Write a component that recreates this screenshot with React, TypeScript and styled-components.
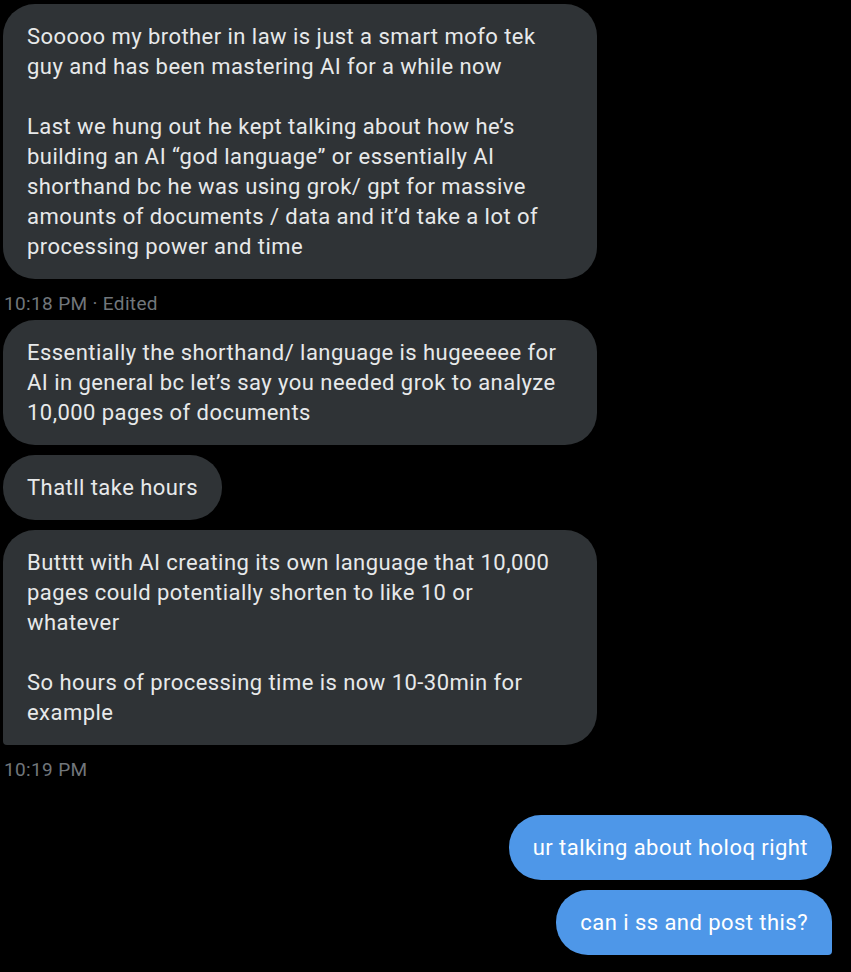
import React from "react";
import styled, { createGlobalStyle, css } from "styled-components";

const GlobalStyle = createGlobalStyle`
  html, body {
    margin: 0;
    padding: 0;
    background: #000000;
  }
  body {
    font-family: Roboto, "Liberation Sans", Arial, sans-serif;
    -webkit-font-smoothing: antialiased;
  }
`;

const Thread = styled.div`
  display: flex;
  flex-direction: column;
  padding: 4px 19px 0 3px;
  height: 972px;
  box-sizing: border-box;
  overflow: hidden;
`;

const Group = styled.div<{ $sent?: boolean; $after: number }>`
  display: flex;
  flex-direction: column;
  align-items: ${(p) => (p.$sent ? "flex-end" : "flex-start")};
  gap: 10px;
  margin-bottom: ${(p) => p.$after}px;
`;

const Bubble = styled.div<{ $sent?: boolean; $tail?: boolean; $wide?: boolean }>`
  box-sizing: border-box;
  max-width: 594px;
  ${(p) => p.$wide && css`width: 594px;`}
  padding: 17.5px 24px;
  border-radius: 32px;
  font-size: 22px;
  letter-spacing: 0.45px;
  line-height: 30px;
  white-space: pre-line;
  color: ${(p) => (p.$sent ? "#ffffff" : "#e7e9ea")};
  background: ${(p) => (p.$sent ? "#4e97e8" : "#2f3336")};
  ${(p) =>
    p.$tail &&
    (p.$sent
      ? css`border-bottom-right-radius: 4px;`
      : css`border-bottom-left-radius: 4px;`)}
`;

const Meta = styled.div`
  margin-top: 2px;
  font-size: 19px;
  letter-spacing: 0.35px;
  line-height: 26px;
  color: #71767b;
  padding-left: 1px;
`;

type Msg = { text: string; wide?: boolean; tail?: boolean };
type G = { sent?: boolean; msgs: Msg[]; meta: string; after: number };

const groups: G[] = [
  {
    msgs: [
      {
        wide: true,
        text:
          "Sooooo my brother in law is just a smart mofo tek\nguy and has been mastering AI for a while now\n\nLast we hung out he kept talking about how he\u2019s\nbuilding an AI \u201cgod language\u201d or essentially AI\nshorthand bc he was using grok/ gpt for massive\namounts of documents / data and it\u2019d take a lot of\nprocessing power and time",
      },
    ],
    meta: "10:18 PM \u00b7 Edited",
    after: 3,
  },
  {
    msgs: [
      {
        wide: true,
        text:
          "Essentially the shorthand/ language is hugeeeee for\nAI in general bc let\u2019s say you needed grok to analyze\n10,000 pages of documents",
      },
      { text: "Thatll take hours" },
      {
        wide: true,
        tail: true,
        text:
          "Butttt with AI creating its own language that 10,000\npages could potentially shorten to like 10 or\nwhatever\n\nSo hours of processing time is now 10-30min for\nexample",
      },
    ],
    meta: "10:19 PM",
    after: 32,
  },
  {
    sent: true,
    msgs: [
      { text: "ur talking about holoq right" },
      { text: "can i ss and post this?", tail: true },
    ],
    meta: "10:21 PM",
    after: 0,
  },
];

export default function App() {
  return (
    <>
      <GlobalStyle />
      <Thread>
        {groups.map((g, i) => (
          <Group key={i} $sent={g.sent} $after={g.after}>
            {g.msgs.map((m, j) => (
              <Bubble key={j} $sent={g.sent} $tail={m.tail} $wide={m.wide}>
                {m.text}
              </Bubble>
            ))}
            <Meta>{g.meta}</Meta>
          </Group>
        ))}
      </Thread>
    </>
  );
}
